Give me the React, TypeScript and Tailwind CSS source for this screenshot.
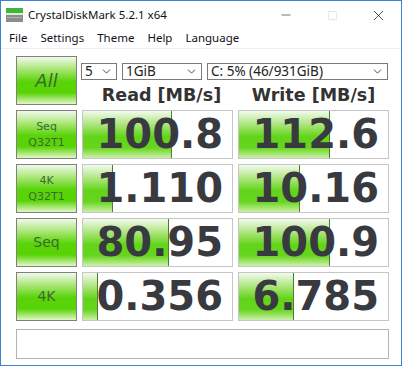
import { ChevronDown, Minus, Square, X } from "lucide-react";

const rows = [
  { label: ["Seq", "Q32T1"], read: "100.8", readBar: 89, write: "112.6", writeBar: 91 },
  { label: ["4K", "Q32T1"], read: "1.110", readBar: 30, write: "10.16", writeBar: 61 },
  { label: ["Seq"], read: "80.95", readBar: 86, write: "100.9", writeBar: 91 },
  { label: ["4K"], read: "0.356", readBar: 15, write: "6.785", writeBar: 55 },
];

function GreenButton({ children }: any) {
  return (
    <div className="flex h-[49px] flex-col items-center justify-center border border-[#808080] bg-[linear-gradient(to_bottom,#f0f9ec_0%,#a5e56e_28%,#5ad40a_52%,#58d306_76%,#e2f7c6_100%)] text-[#3b6a30]">
      {children}
    </div>
  );
}

function ValueBox({ value, bar }: any) {
  return (
    <div className="relative h-[49px] overflow-hidden border border-[#c6c6c6] bg-white">
      <div
        className="absolute left-0 top-0 bottom-0 border-r border-[#4b7d33] bg-[linear-gradient(to_bottom,#f2faee_0%,#a9e478_30%,#62d418_55%,#66d51e_78%,#cdf0a8_100%)]"
        style={{ width: bar }}
      />
      <div className="relative pr-[9px] text-right font-['DejaVu_Sans',sans-serif] text-[40px] font-bold leading-[47px] text-[#393940]">
        {value}
      </div>
    </div>
  );
}

function Select({ text, w }: any) {
  return (
    <div
      className="flex h-[17px] items-center justify-between border border-[#7a7a7a] bg-white pl-[3px] pr-[3px] text-[13.5px] leading-none text-[#222]"
      style={{ width: w }}
    >
      <span>{text}</span>
      <ChevronDown size={13} strokeWidth={1.6} color="#333" />
    </div>
  );
}

export default function App() {
  return (
    <div className="h-[368px] w-[405px] bg-white font-['Noto_Sans',sans-serif]">
      <div className="flex h-[366px] w-[402px] flex-col border border-[#3a84d0]">
        {/* title bar */}
        <div className="flex h-[28px] items-center">
          <svg width="17" height="16" viewBox="0 0 17 16" className="ml-[5px]">
            <rect x="0" y="1" width="17" height="5" fill="#3fb53a" />
            <rect x="0" y="6" width="17" height="2" fill="#d8efd4" />
            <rect x="0" y="8" width="17" height="7" fill="#8c8c8c" />
            <rect x="1" y="10" width="15" height="1" fill="#b4b4b4" />
          </svg>
          <div className="ml-[5px] text-[11.5px] text-[#111]">CrystalDiskMark 5.2.1 x64</div>
          <div className="ml-auto flex items-center">
            <div className="flex w-[46px] justify-center">
              <Minus size={14} strokeWidth={1} color="#111" />
            </div>
            <div className="flex w-[46px] justify-center">
              <Square size={11} strokeWidth={1} color="#c8c8c8" />
            </div>
            <div className="flex w-[46px] justify-center">
              <X size={17} strokeWidth={1} color="#111" />
            </div>
          </div>
        </div>

        {/* menu */}
        <div className="flex h-[18px] items-center gap-[13px] pl-[8px] text-[11.5px] text-[#111]">
          <span>File</span>
          <span>Settings</span>
          <span>Theme</span>
          <span>Help</span>
          <span>Language</span>
        </div>
        <div className="mt-[1px] h-px bg-[#eeeeee]" />

        {/* content */}
        <div className="pl-[15px] pt-[7px]">
          <div className="grid grid-cols-[61px_151px_151px] gap-[5px]">
            <GreenButton>
              <span className="font-['DejaVu_Sans',sans-serif] text-[18px] italic">All</span>
            </GreenButton>
            <div className="col-span-2 flex h-[49px] flex-col">
              <div className="-ml-px mt-[7px] flex gap-[5px]">
                <Select text="5" w={36} />
                <Select text="1GiB" w={80} />
                <Select text="C: 5% (46/931GiB)" w={181} />
              </div>
              <div className="mt-[5px] grid grid-cols-[151px_151px] gap-[5px] font-['DejaVu_Sans',sans-serif] text-[17.5px] font-bold leading-[20px] text-[#333]">
                <div className="pl-[8px] text-center">Read [MB/s]</div>
                <div className="text-center">Write [MB/s]</div>
              </div>
            </div>

            {rows.map((r) => (
              <div key={r.label.join("-")} className="contents">
                <GreenButton>
                  {r.label.length === 2 ? (
                    <div className="font-['DejaVu_Sans',sans-serif] text-[11px] leading-[16px] text-center">
                      <div>{r.label[0]}</div>
                      <div>{r.label[1]}</div>
                    </div>
                  ) : (
                    <span className="font-['DejaVu_Sans',sans-serif] text-[14px]">{r.label[0]}</span>
                  )}
                </GreenButton>
                <ValueBox value={r.read} bar={r.readBar} />
                <ValueBox value={r.write} bar={r.writeBar} />
              </div>
            ))}
          </div>
          <div className="mt-[8px] h-[30px] w-[373px] border border-[#b4b4b4] bg-white" />
        </div>
      </div>
    </div>
  );
}
